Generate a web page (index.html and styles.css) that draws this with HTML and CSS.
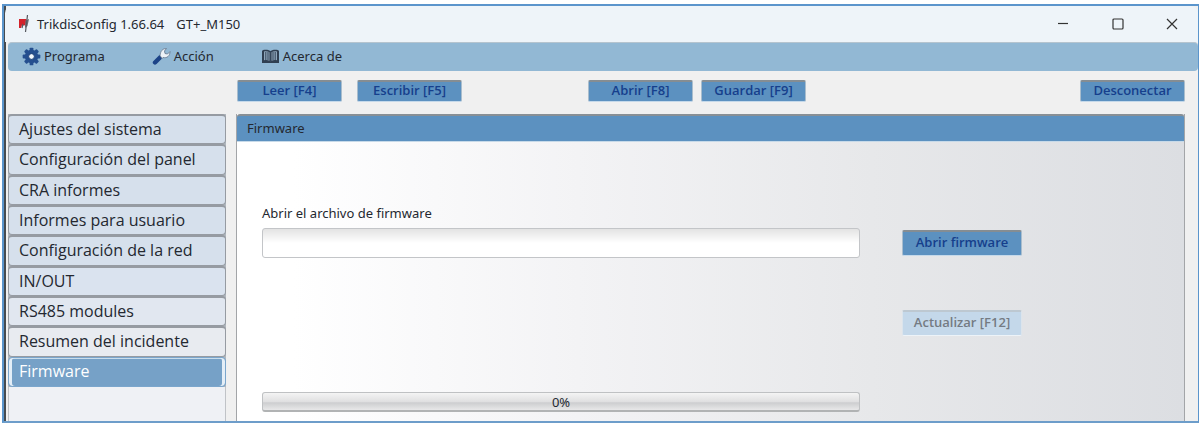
FILE: index.html
```html
<!DOCTYPE html>
<html lang="es">
<head>
<meta charset="utf-8">
<meta name="viewport" content="width=device-width, initial-scale=1">
<title>TrikdisConfig</title>
<link rel="stylesheet" href="styles.css">
</head>
<body>
<div class="window">
  <header class="titlebar">
    <svg class="logo" width="12" height="18" viewBox="0 0 12 18" aria-hidden="true">
      <path d="M0 4h7.500l-1 7-1.500-1-1 1-1-1-1 3H0z" fill="#d3222b"/>
      <path d="M6.500 5.500L10 4 8.500 11 6 13z" fill="#6d7077"/>
      <path d="M8.500 0L6.500 17M3 13l1-4" fill="none" stroke="#55585e" stroke-width="1.2"/>
    </svg>
    <h1 class="title">TrikdisConfig 1.66.64<span class="model">GT+_M150</span></h1>
    <div class="window-controls">
      <button class="window-button" type="button" aria-label="Minimizar"><svg width="12" height="12" viewBox="0 0 12 12"><path d="M1 5.500h10"/></svg></button>
      <button class="window-button" type="button" aria-label="Maximizar"><svg width="12" height="12" viewBox="0 0 12 12"><rect x="1" y="1" width="10" height="10" rx="1"/></svg></button>
      <button class="window-button" type="button" aria-label="Cerrar"><svg width="12" height="12" viewBox="0 0 12 12"><path d="M1 1l10 10M11 1L1 11"/></svg></button>
    </div>
  </header>

  <nav class="menubar" aria-label="Menú">
    <button class="menu-item" type="button">
      <svg width="19" height="19" viewBox="-10 -10 20 20" aria-hidden="true">
        <g fill="#254f8f">
          <circle r="7"/>
          <rect x="-2" y="-9.3" width="4" height="18.6" rx="1"/>
          <rect x="-2" y="-9.3" width="4" height="18.6" rx="1" transform="rotate(45)"/>
          <rect x="-2" y="-9.3" width="4" height="18.6" rx="1" transform="rotate(90)"/>
          <rect x="-2" y="-9.3" width="4" height="18.6" rx="1" transform="rotate(135)"/>
        </g>
        <circle r="3" fill="#f2f7fc" stroke="#183c75"/>
      </svg>
      Programa
    </button>
    <button class="menu-item" type="button">
      <svg width="19" height="19" viewBox="0 0 19 19" aria-hidden="true">
        <path d="M3 15.500L8.500 10" stroke="#1d4488" stroke-width="4.400" stroke-linecap="round"/>
        <path d="M8 8.500C8.500 4 10.500 1.500 14.500 1.500L12.500 4l.5 2.500 2.500.5L18 4.500C18 9 15 11.500 11 10.500L10 11.500z" fill="#eef2f7" stroke="#6d7f95" stroke-width=".9"/>
      </svg>
      Acción
    </button>
    <button class="menu-item" type="button">
      <svg width="19" height="19" viewBox="0 0 19 19" aria-hidden="true">
        <path d="M1 4l1-1c3-.5 5-.5 7.500 1C12 2.500 14 2.500 17 3l1 1v12H1z" fill="#303f51"/>
        <path d="M3 4.500c2-.3 4-.2 5.500.7v8.600c-1.500-.8-3.500-.8-5.500-.5zM16 4.500c-2-.3-4-.2-5.500.7v8.600c1.500-.8 3.500-.8 5.500-.5z" fill="#8fa6ba"/>
        <path d="M4.800 5v8M7 5v8M12 5v8M14.200 5v8M9.500 4v11" stroke="#34465a"/>
      </svg>
      Acerca de
    </button>
  </nav>

  <div class="toolbar">
    <button class="action" type="button">Leer [F4]</button>
    <button class="action" type="button">Escribir [F5]</button>
    <button class="action action-file" type="button">Abrir [F8]</button>
    <button class="action action-save" type="button">Guardar [F9]</button>
    <button class="action action-end" type="button">Desconectar</button>
  </div>

  <div class="workspace">
    <nav class="sidebar" aria-label="Secciones">
      <div class="sections">
        <button class="section" type="button">Ajustes del sistema</button>
        <button class="section" type="button">Configuración del panel</button>
        <button class="section" type="button">CRA informes</button>
        <button class="section" type="button">Informes para usuario</button>
        <button class="section" type="button">Configuración de la red</button>
        <button class="section section-light" type="button">IN/OUT</button>
        <button class="section section-lighter" type="button">RS485 modules</button>
        <button class="section section-pale" type="button">Resumen del incidente</button>
        <button class="section section-active" type="button" aria-current="page">Firmware</button>
      </div>
    </nav>
    <main class="panel">
      <h2 class="panel-title">Firmware</h2>
      <div class="panel-body">
        <label class="field-label" for="firmware-file">Abrir el archivo de firmware</label>
        <input class="field" id="firmware-file" type="text">
        <button class="action action-wide" type="button">Abrir firmware</button>
        <button class="action action-wide action-update" type="button" disabled>Actualizar [F12]</button>
        <div class="progress" role="progressbar" aria-label="Progreso" aria-valuemin="0" aria-valuemax="100" aria-valuenow="0">0%</div>
      </div>
    </main>
  </div>
</div>
</body>
</html>
```
FILE: styles.css
```css
* { box-sizing: border-box; }

body {
  margin: 0;
  padding: 4px 1px 4px 2px;
  background: #fff;
  color: #242830;
  font-family: "Noto Sans", "Open Sans", sans-serif;
}

button, input { font-family: inherit; color: inherit; }

.window {
  display: flex;
  flex-direction: column;
  min-height: 419px;
  background: #f0f0f0;
  border: 2px solid #5b95cc;
  border-width: 2px 1px 2px 2px;
  border-bottom-color: #6d9dca;
  box-shadow: inset 2px 0 #454b50;
}

.titlebar {
  display: flex;
  align-items: center;
  height: 36px;
  margin-left: 1px;
  padding-left: 14px;
  background: #eef4f9;
  border-radius: 7px 7px 0 0;
}

.title {
  margin: 0 0 0 6px;
  font-size: 13px;
  font-weight: 400;
}

.model { margin-left: 12px; }

.window-controls {
  display: flex;
  margin-left: auto;
  padding-right: 3px;
}

.window-button {
  display: grid;
  place-items: center;
  width: 55px;
  height: 34px;
  padding: 0;
  border: 0;
  background: none;
}

.window-button:last-child { width: 46px; margin-left: 4px; }

.window-button svg {
  fill: none;
  stroke: #333;
  stroke-width: 1.2;
}

.menubar {
  display: flex;
  gap: 47px;
  height: 29px;
  margin-left: 4px;
  padding: 0 0 2px 14px;
  background: #92b8d4;
  border-top: 1px solid #b5c4cf;
  border-radius: 4px;
}

.menu-item {
  display: flex;
  align-items: center;
  gap: 3px;
  padding: 0;
  border: 0;
  background: none;
  font-size: 13px;
  white-space: nowrap;
}

.toolbar {
  display: flex;
  padding: 9px 13px 12px 233px;
}

.action {
  width: 105px;
  height: 22px;
  padding: 0 0 2px;
  border: 1px solid #a9bdcd;
  border-top: 2px solid #858d93;
  border-bottom-color: #c5d9ea;
  border-radius: 2px;
  background: #5c91c0;
  color: #163f8c;
  font-family: "Open Sans", "Noto Sans", sans-serif;
  font-size: 13px;
  font-weight: 600;
  line-height: 17px;
  white-space: nowrap;
}

.action + .action { margin-left: 15px; }
.toolbar .action-file { margin-left: 126px; }
.toolbar .action-save { margin-left: 8px; }
.toolbar .action-end { margin-left: auto; }

.workspace {
  display: flex;
  flex: 1;
  gap: 10px;
  padding: 0 13px 0 4px;
}

.sidebar {
  flex: none;
  width: 218px;
  background: #eff1f5;
  border: 1px solid #c0c3c7;
  border-width: 0 1px;
}

.sections {
  display: grid;
  grid-template-rows: repeat(9, 1fr);
  height: 273px;
  margin: 0 -1px;
  background: #b1b7be;
}

.section {
  padding: 0 10px 1px;
  border: 1px solid #969ba2;
  border-top-width: 2px;
  border-radius: 4px;
  background: #d6e0ec;
  font-family: "Open Sans", "Noto Sans", sans-serif;
  font-size: 16px;
  line-height: 22px;
  text-align: left;
  white-space: nowrap;
}

.section-light { background: #dae3ef; }
.section-lighter { background: #e1e7f0; }
.section-pale { background: #e8ebf0; }

.section-active {
  border: 1px solid #7ba6cc;
  background: #76a1c7;
  box-shadow: inset 3px 0 #e4eef7, inset -3px 0 #e4eef7, inset 0 1px #c9ddec;
  color: #fff;
}

.panel {
  flex: 1;
  min-width: 0;
  border: 1px solid #a3a5a8;
  border-top: 0;
  border-bottom: 0;
  background: linear-gradient(90deg, #fff 6%, #f3f3f5 36%, #e7e8ea 67%, #dcdee2);
}

.panel-title {
  height: 28px;
  margin: 0;
  padding-left: 10px;
  border-top: 2px solid #888f95;
  border-bottom: 1px solid #c7dae9;
  border-radius: 3px 3px 0 0;
  background: #5c91c0;
  font-size: 13px;
  font-weight: 400;
  line-height: 25px;
}

.panel-body {
  display: grid;
  grid-template-columns: minmax(0, 1fr) 120px;
  grid-template-rows: 24px 30px 51px 28px 55px 20px;
  column-gap: 42px;
  padding: 62px 162px 9px 25px;
}

.field-label {
  grid-column: 1 / -1;
  font-size: 13px;
  line-height: 19px;
}

.field {
  width: 100%;
  padding: 0 8px;
  border: 1px solid #c3c5c8;
  border-radius: 3px;
  background: linear-gradient(#e3e3e3, #fff 50%);
  font-size: 13px;
}

.action-wide {
  width: 120px;
  height: 26px;
  line-height: 21px;
}

.panel-body .action-wide {
  align-self: center;
  margin: 0;
}

.panel-body .action-update {
  grid-row: 4;
  grid-column: 2;
  border-color: #bdc8d1 #dbe4ec #edf3f8;
  background: #c4d8ea;
  color: #747b83;
}

.progress {
  grid-row: 6;
  grid-column: 1;
  border: 1px solid #bfc1c3;
  border-bottom: 2px solid #b1b3b4;
  border-radius: 3px;
  background: linear-gradient(#f4f4f4, #e0e0e1 50%, #cdced0 58%, #e8e8e9);
  font-size: 13px;
  line-height: 18px;
  text-align: center;
}
```
